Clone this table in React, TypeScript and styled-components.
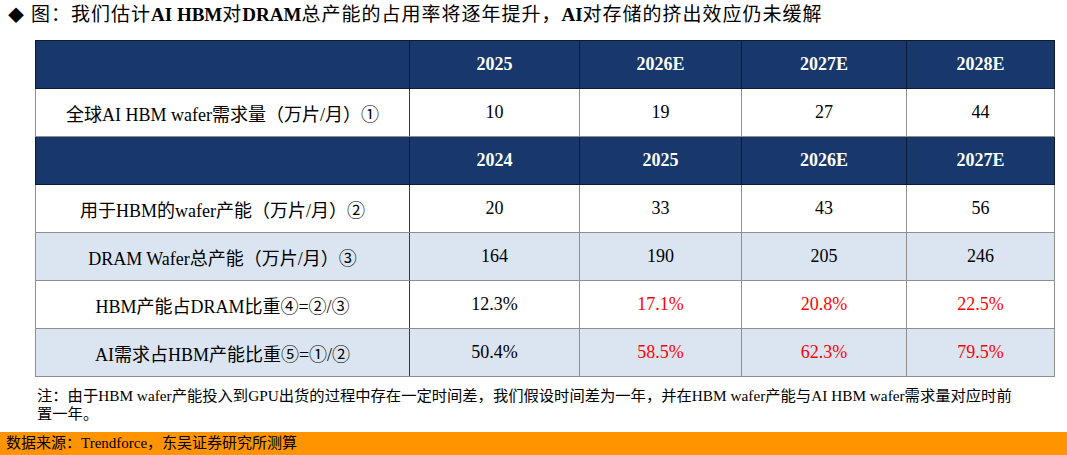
import styled, { createGlobalStyle } from "styled-components";

const GlobalStyle = createGlobalStyle`
  html, body {
    margin: 0;
    padding: 0;
    background: #ffffff;
  }
  body {
    font-family: "Liberation Serif", "Noto Sans CJK SC", serif;
    color: #000000;
  }
`;

const Page = styled.div`
  width: 1067px;
  height: 455px;
  display: flex;
  flex-direction: column;
  overflow: hidden;
`;

const Title = styled.div`
  height: 30px;
  line-height: 30px;
  margin-bottom: 10px;
  padding-left: 8px;
  font-size: 19px;
  letter-spacing: 1px;
  white-space: nowrap;
`;

const Diamond = styled.span`
  font-size: 16px;
  margin-right: 6px;
`;

const Bold = styled.b`
  font-weight: 700;
  letter-spacing: 0;
`;

const Table = styled.table`
  margin-left: 35px;
  width: 1019px;
  table-layout: fixed;
  border-collapse: collapse;
  border: 1px solid #7a7a7a;
  font-size: 18px;
`;

const Col = styled.col<{ $w: number }>`
  width: ${(p) => p.$w}px;
`;

const Row = styled.tr`
  height: 48px;
`;

const HeadCell = styled.th`
  background: #18376b;
  color: #ffffff;
  font-weight: 700;
  text-align: center;
  vertical-align: middle;
  border: 1px solid #0c1a36;
  padding: 0;
`;

const Cell = styled.td<{ $shade?: boolean; $red?: boolean }>`
  background: ${(p) => (p.$shade ? "#dbe5f1" : "#ffffff")};
  color: ${(p) => (p.$red ? "#ff0000" : "#000000")};
  text-align: center;
  vertical-align: middle;
  border: 1px solid #8e8e8e;
  padding: 0;
  white-space: nowrap;

  &:first-child {
    border-right-color: #3a3a3a;
  }
`;

const Note = styled.div`
  margin-top: 10px;
  padding-left: 37px;
  font-size: 15.3px;
  line-height: 18px;
  white-space: nowrap;
`;

const Source = styled.div`
  margin-top: auto;
  height: 23px;
  line-height: 23px;
  background: #ff9300;
  padding-left: 6px;
  font-size: 15px;
  white-space: nowrap;
`;

type DataRow = {
  label: string;
  values: string[];
  shade?: boolean;
  red?: boolean;
};

const widths = [374, 170, 162, 165, 148];

const firstHead = ["2025", "2026E", "2027E", "2028E"];
const secondHead = ["2024", "2025", "2026E", "2027E"];

const demand: DataRow = {
  label: "全球AI HBM wafer需求量（万片/月）①",
  values: ["10", "19", "27", "44"],
};

const rows: DataRow[] = [
  { label: "用于HBM的wafer产能（万片/月）②", values: ["20", "33", "43", "56"] },
  { label: "DRAM Wafer总产能（万片/月）③", values: ["164", "190", "205", "246"], shade: true },
  { label: "HBM产能占DRAM比重④=②/③", values: ["12.3%", "17.1%", "20.8%", "22.5%"], red: true },
  { label: "AI需求占HBM产能比重⑤=①/②", values: ["50.4%", "58.5%", "62.3%", "79.5%"], shade: true, red: true },
];

function HeadRow({ years }: { years: string[] }) {
  return (
    <Row>
      <HeadCell />
      {years.map((y) => (
        <HeadCell key={y}>{y}</HeadCell>
      ))}
    </Row>
  );
}

function BodyRow({ row }: { row: DataRow }) {
  return (
    <Row>
      <Cell $shade={row.shade}>{row.label}</Cell>
      {row.values.map((v, i) => (
        <Cell key={i} $shade={row.shade} $red={row.red && i > 0}>
          {v}
        </Cell>
      ))}
    </Row>
  );
}

export default function App() {
  return (
    <Page>
      <GlobalStyle />
      <Title>
        <Diamond>◆</Diamond>图：我们估计<Bold>AI HBM</Bold>对<Bold>DRAM</Bold>总产能的占用率将逐年提升，<Bold>AI</Bold>对存储的挤出效应仍未缓解
      </Title>
      <Table>
        <colgroup>
          {widths.map((w, i) => (
            <Col key={i} $w={w} />
          ))}
        </colgroup>
        <tbody>
          <HeadRow years={firstHead} />
          <BodyRow row={demand} />
          <HeadRow years={secondHead} />
          {rows.map((r) => (
            <BodyRow key={r.label} row={r} />
          ))}
        </tbody>
      </Table>
      <Note>
        注：由于HBM wafer产能投入到GPU出货的过程中存在一定时间差，我们假设时间差为一年，并在HBM wafer产能与AI HBM wafer需求量对应时前
        <br />
        置一年。
      </Note>
      <Source>数据来源：Trendforce，东吴证券研究所测算</Source>
    </Page>
  );
}
